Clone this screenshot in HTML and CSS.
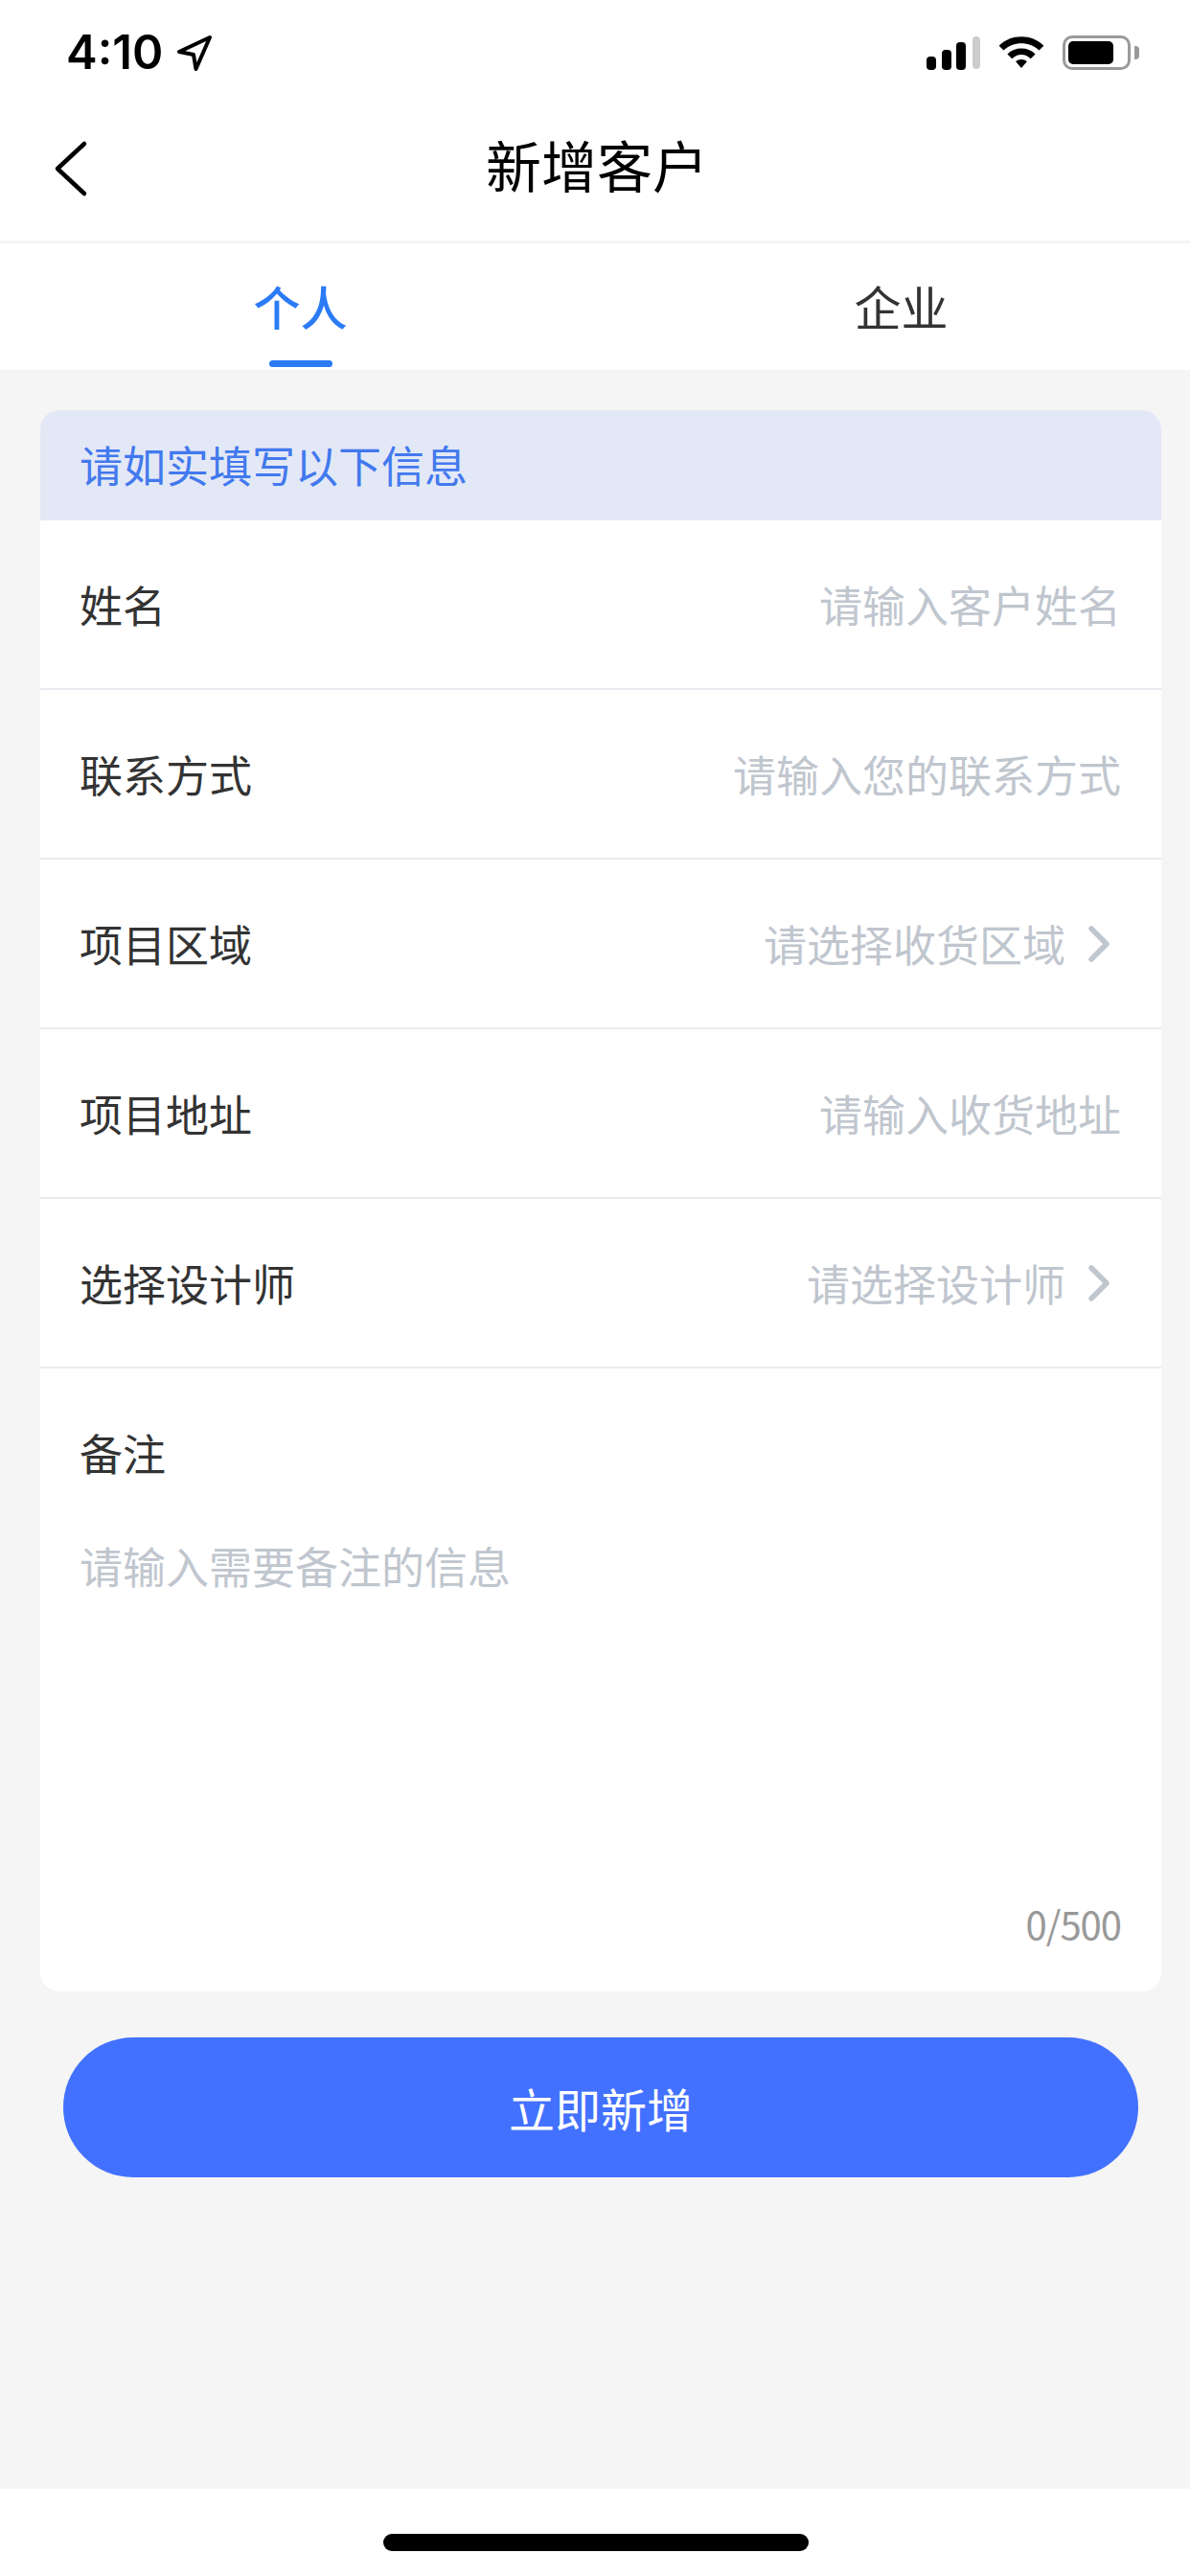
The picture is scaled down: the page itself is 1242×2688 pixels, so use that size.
FILE: index.html
```html
<!DOCTYPE html>
<html lang="zh-CN">
<head>
    <meta charset="UTF-8">
    <meta name="viewport" content="width=device-width, initial-scale=1.0">
    <title>新增客户</title>
    <link rel="stylesheet" href="styles.css">
</head>
<body>
    <div class="status-bar">
        <div class="status-left">
            <span class="time">4:10</span>
            <svg class="arrow-icon" width="38" height="38" viewBox="0 0 38 38"><path d="M35 3 L3 18 L18 21 L20.5 36 Z" fill="none" stroke="#000" stroke-width="4" stroke-linejoin="round"/></svg>
        </div>
        <div class="status-right">
            <svg width="56" height="37" viewBox="0 0 56 37"><rect x="0" y="23" width="10" height="14" rx="4" fill="#000"/><rect x="16" y="16" width="10" height="21" rx="4" fill="#000"/><rect x="31" y="8" width="10" height="29" rx="4" fill="#000"/><rect x="48" y="2" width="8" height="34" rx="4" fill="#ccc"/></svg>
            <svg width="50" height="37" viewBox="0 0 50 38"><path d="M1 12 C14 -1 36 -1 49 12 L44 17 C33 7 17 7 6 17 Z" fill="#000"/><path d="M10 21 C18 13 32 13 40 21 L35 26 C29 20 21 20 15 26 Z" fill="#000"/><path d="M19 29 C22 26 28 26 31 29 L25 36 Z" fill="#000"/></svg>
            <div class="battery"><div class="battery-fill"></div></div>
            <div class="battery-cap"></div>
        </div>
    </div>

    <div class="nav-bar">
        <svg class="back-icon" width="40" height="64" viewBox="0 0 40 64"><path d="M33 6 L5 32 L33 58" fill="none" stroke="#000" stroke-width="4.5" stroke-linecap="round" stroke-linejoin="round"/></svg>
        <div class="nav-title">新增客户</div>
    </div>

    <div class="tabs">
        <div class="tab active">个人</div>
        <div class="tab second">企业</div>
    </div>

    <div class="content">
        <div class="card">
            <div class="notice">请如实填写以下信息</div>
            <div class="row">
                <span class="label">姓名</span>
                <span class="placeholder">请输入客户姓名</span>
            </div>
            <div class="row">
                <span class="label">联系方式</span>
                <span class="placeholder">请输入您的联系方式</span>
            </div>
            <div class="row">
                <span class="label">项目区域</span>
                <span class="placeholder with-arrow">请选择收货区域</span>
                <svg class="chevron" width="24" height="42" viewBox="0 0 24 42"><path d="M4 5 L20 21 L4 37" fill="none" stroke="#c0c6ce" stroke-width="5.5" stroke-linecap="round" stroke-linejoin="round"/></svg>
            </div>
            <div class="row">
                <span class="label">项目地址</span>
                <span class="placeholder">请输入收货地址</span>
            </div>
            <div class="row">
                <span class="label">选择设计师</span>
                <span class="placeholder with-arrow">请选择设计师</span>
                <svg class="chevron" width="24" height="42" viewBox="0 0 24 42"><path d="M4 5 L20 21 L4 37" fill="none" stroke="#c0c6ce" stroke-width="5.5" stroke-linecap="round" stroke-linejoin="round"/></svg>
            </div>
            <div class="remark">
                <div class="label">备注</div>
                <div class="placeholder remark-text">请输入需要备注的信息</div>
                <div class="count">0/500</div>
            </div>
        </div>
        <div class="submit">立即新增</div>
    </div>

    <div class="home-area"><div class="home-bar"></div></div>
</body>
</html>
```

FILE: styles.css
```css
:root {
    --blue: #2b7bf6;
    --button-blue: #4371ff;
    --page-bg: #f5f5f5;
    --text: #333333;
    --hint: #c0c6ce;
    --line: #e8ebf0;
}
* {
    box-sizing: border-box;
}
html, body {
    height: 100%;
}
body {
    margin: 0;
    display: flex;
    flex-direction: column;
    background-color: var(--page-bg);
    color: var(--text);
    font-family: "Noto Sans CJK SC", "Noto Sans", sans-serif;
}
.status-bar {
    height: 106px;
    padding: 30px 53px 0 69px;
    display: flex;
    justify-content: space-between;
    align-items: flex-start;
    background-color: #fff;
}
.status-left {
    display: flex;
    align-items: center;
    gap: 14px;
}
.time {
    font-family: Inter, sans-serif;
    font-size: 49px;
    font-weight: 600;
    line-height: 50px;
    color: #000;
}
.status-right {
    display: flex;
    align-items: center;
    gap: 18px;
    padding-top: 6px;
}
.battery {
    width: 71px;
    height: 36px;
    padding: 3px;
    border: 3px solid #999;
    border-radius: 10px;
}
.battery-fill {
    width: 47px;
    height: 100%;
    background-color: #000;
    border-radius: 5px;
}
.battery-cap {
    width: 5px;
    height: 14px;
    margin-left: -14px;
    background-color: #999;
    border-radius: 0 4px 4px 0;
}
.nav-bar {
    height: 148px;
    padding-left: 55px;
    display: flex;
    align-items: center;
    position: relative;
    background-color: #fff;
    border-bottom: 3px solid var(--page-bg);
}
.back-icon {
    margin-top: -6px;
}
.nav-title {
    position: absolute;
    left: 4px;
    right: 0;
    top: 25px;
    text-align: center;
    font-size: 58px;
    line-height: 80px;
    color: #000;
}
.tabs {
    height: 132px;
    display: grid;
    grid-template-columns: 627px 615px;
    background-color: #fff;
}
.tab {
    position: relative;
    padding-top: 33px;
    text-align: center;
    font-size: 49px;
    line-height: 64px;
}
.tab.second {
    padding-left: 12px;
}
.tab.active {
    color: var(--blue);
    font-weight: 500;
}
.tab.active::after {
    content: "";
    position: absolute;
    left: 50%;
    bottom: 3px;
    width: 66px;
    height: 7px;
    margin-left: -33px;
    background-color: var(--blue);
    border-radius: 4px;
}
.content {
    flex: 1;
    padding: 42px 30px 0 42px;
}
.card {
    background-color: #fff;
    border-radius: 20px;
    overflow: hidden;
}
.notice {
    height: 115px;
    padding-left: 41px;
    padding-bottom: 2px;
    display: flex;
    align-items: center;
    background-color: #e3e8f6;
    color: #4279ee;
    font-size: 45px;
}
.row {
    height: 177px;
    padding: 0 42px 0 41px;
    display: flex;
    align-items: center;
    border-bottom: 2px solid var(--line);
    font-size: 45px;
}
.label {
    font-size: 45px;
    line-height: 60px;
}
.placeholder {
    margin-left: auto;
    color: var(--hint);
}
.with-arrow {
    margin-right: 23px;
}
.chevron {
    margin-right: 11px;
}
.remark {
    height: 650px;
    padding: 58px 42px 0 41px;
    position: relative;
}
.remark-text {
    margin-top: 58px;
    font-size: 45px;
    line-height: 60px;
}
.count {
    position: absolute;
    right: 42px;
    bottom: 46px;
    color: #999;
    font-size: 40px;
    letter-spacing: -1px;
    line-height: 50px;
}
.submit {
    height: 146px;
    margin: 48px 24px 0;
    display: flex;
    align-items: center;
    justify-content: center;
    background-color: var(--button-blue);
    border-radius: 73px;
    color: #fff;
    font-size: 48px;
}
.home-area {
    height: 91px;
    padding-top: 47px;
    background-color: #fff;
}
.home-bar {
    width: 444px;
    height: 18px;
    margin-left: 400px;
    background-color: #000;
    border-radius: 9px;
}
```
